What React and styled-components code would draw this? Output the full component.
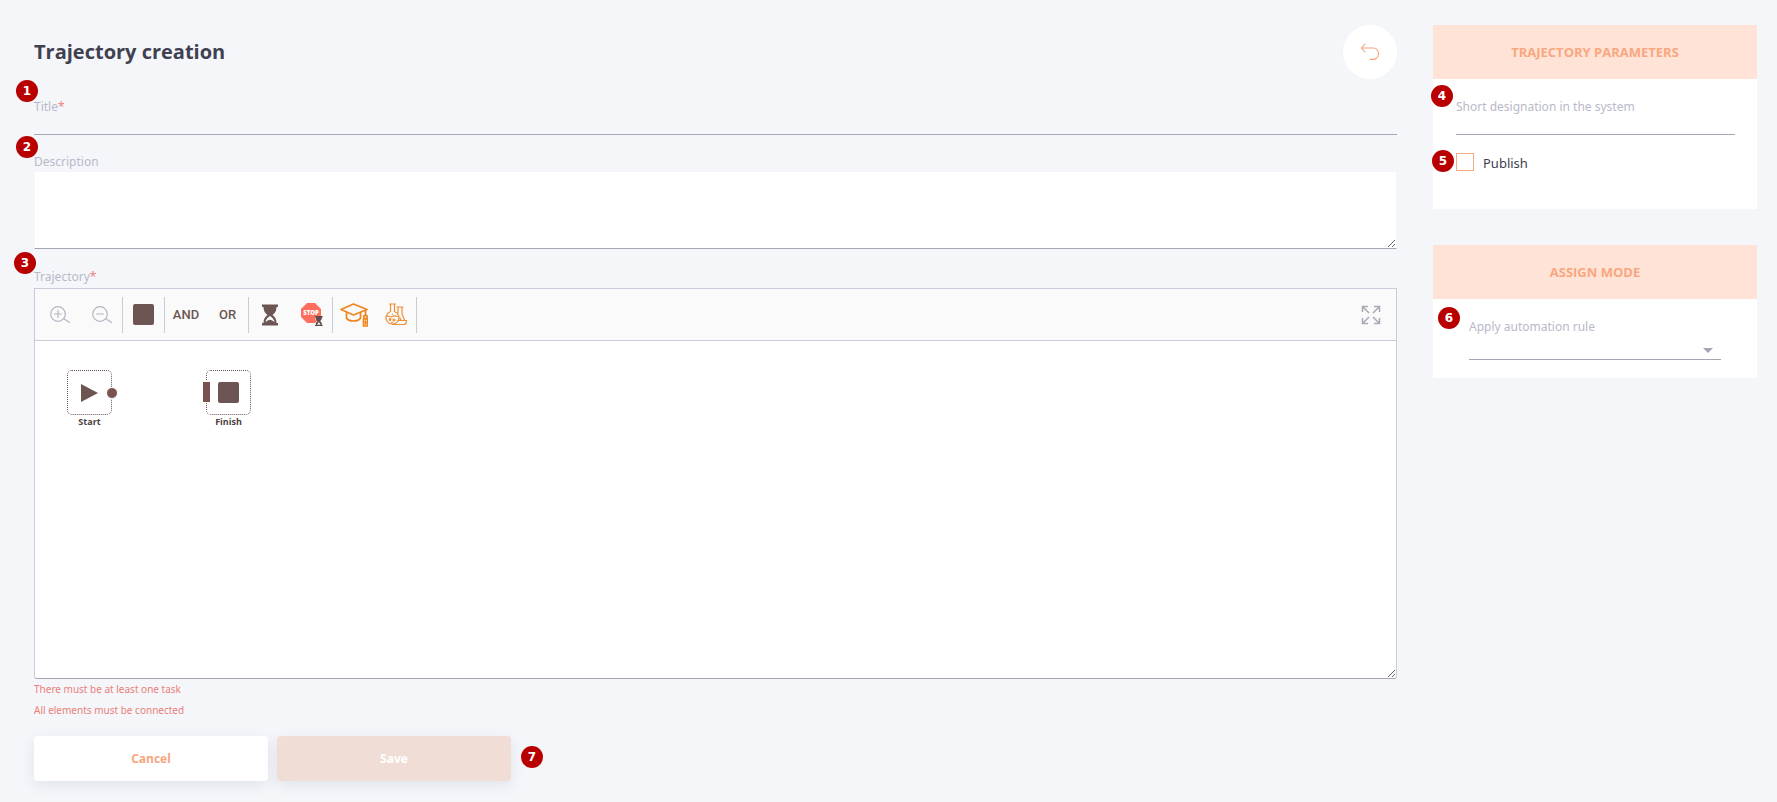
import React, { useState } from "react";
import styled, { createGlobalStyle } from "styled-components";

const GlobalStyle = createGlobalStyle`
    *, *::before, *::after {
        box-sizing: border-box;
    }
    body {
        margin: 0;
        background: #f4f6fa;
        color: #3f4050;
        font-family: "Noto Sans", "Open Sans", sans-serif;
        font-size: 12px;
    }
    button, input, textarea, select {
        font: inherit;
        color: inherit;
    }
`

const Page = styled.div`
    display: grid;
    grid-template-columns: minmax(0, 1fr) 324px;
    gap: 36px;
    padding: 25px 20px 21px 34px;
`
const Main = styled.main`
    display: flex;
    flex-direction: column;
`
const Header = styled.header`
    display: flex;
    align-items: center;
    justify-content: space-between;
    height: 54px;
    margin-bottom: 18px;
`
const PageTitle = styled.h1`
    margin: 0;
    font-family: "Open Sans", sans-serif;
    font-size: 20px;
    line-height: 28px;
    font-weight: 700;
`
const BackButton = styled.button`
    display: grid;
    place-items: center;
    width: 54px;
    height: 54px;
    padding: 0;
    border: 0;
    border-radius: 50%;
    background: #fff;
    color: #f5a680;
    cursor: pointer;
`
const Form = styled.form`
    display: flex;
    flex-direction: column;
`
const Field = styled.div`
    position: relative;
    display: flex;
    flex-direction: column;
    margin-bottom: ${props => props.$gap || 0}px;
`
const Label = styled.label`
    font-size: 12px;
    line-height: 20px;
    color: #b8b9c9;
`
const Required = styled.span`
    color: #f37f75;
`
const TextInput = styled.input`
    width: 100%;
    height: 18px;
    padding: 0;
    border: 0;
    border-bottom: 1px solid #a5a6b4;
    border-radius: 0;
    background: transparent;
    outline: none;
`
const TextArea = styled.textarea`
    display: block;
    width: 100%;
    height: 77px;
    padding: 8px;
    border: 1px solid #f4f6fa;
    border-top: 0;
    border-bottom-color: #a5a6b4;
    background: #fff;
    outline: none;
    resize: vertical;
`
const Badge = styled.span`
    position: absolute;
    left: ${props => props.$left}px;
    top: ${props => props.$top}px;
    z-index: 1;
    display: grid;
    place-items: center;
    width: 22px;
    height: 22px;
    border-radius: 50%;
    background: #b80000;
    color: #fff;
    font: 700 12px/22px "DejaVu Sans", sans-serif;
`
const Editor = styled.div`
    display: flex;
    flex-direction: column;
    height: 391px;
    margin-top: 1px;
    overflow: hidden;
    border: 1px solid #cacad9;
    border-bottom-color: #a5a6b4;
    border-radius: 0 0 3px 3px;
    background: #fff;
    resize: vertical;
`
const Toolbar = styled.div`
    display: flex;
    align-items: center;
    flex: none;
    height: 52px;
    padding: 0 5px 0 4px;
    border-bottom: 1px solid #cacad9;
    background: #fafafa;
`
const ToolGroup = styled.div`
    display: flex;
    height: 36px;
    border-right: 1px solid #cacad9;
`
const Tool = styled.button`
    display: grid;
    place-items: center;
    width: 42px;
    height: 36px;
    padding: 0;
    border: 0;
    background: none;
    color: ${props => props.$color || "#6d5553"};
    font: 500 13px/16px Roboto, sans-serif;
    cursor: pointer;

    &:last-child {
        width: 41px;
    }
`
const FullScreenTool = styled(Tool)`
    margin-left: auto;
`
const Canvas = styled.div`
    position: relative;
    flex: 1;
`
const Node = styled.div`
    position: absolute;
    left: ${props => props.$x}px;
    top: ${props => props.$y}px;
    display: grid;
    place-items: center;
    width: 45px;
    height: 45px;
    border: 1px dotted #6d5553;
    border-radius: 5px;
    color: #6d5553;
`
const NodeName = styled.span`
    position: absolute;
    top: 100%;
    left: 0;
    right: 0;
    text-align: center;
    font-family: "Open Sans", sans-serif;
    font-size: 9px;
    line-height: 16px;
    font-weight: 700;
    color: #4d4040;
`
const OutPort = styled.span`
    position: absolute;
    top: 16px;
    right: -7px;
    width: 12px;
    height: 12px;
    border: 1px solid #fff;
    border-radius: 50%;
    background: #7a5250;
`
const InPort = styled.span`
    position: absolute;
    top: 10px;
    left: -5px;
    width: 9px;
    height: 22px;
    border: 1px solid #fff;
    background: #7a5250;
`
const Errors = styled.ul`
    margin: 0 0 15px;
    padding: 0;
    list-style: none;
    font-size: 10px;
    line-height: 21px;
    color: #ea7f78;
`
const Actions = styled.div`
    position: relative;
    display: flex;
    gap: 9px;
`
const ActionButton = styled.button`
    width: 234px;
    height: 45px;
    padding: 0;
    border: 0;
    border-radius: 4px;
    background: ${props => props.$primary ? "#f0ded6" : "#fff"};
    color: ${props => props.$primary ? "#fff" : "#f5a680"};
    box-shadow: 0 4px 14px rgba(60, 64, 90, 0.1);
    font-family: "Open Sans", sans-serif;
    font-size: 12px;
    font-weight: 700;
    cursor: pointer;
`
const Sidebar = styled.aside`
    display: flex;
    flex-direction: column;
    gap: 36px;
`
const Panel = styled.section`
    position: relative;
    background: #fff;
`
const PanelTitle = styled.h2`
    margin: 0;
    font-family: "Open Sans", sans-serif;
    font-size: 13px;
    line-height: 54px;
    font-weight: 700;
    text-align: center;
    text-transform: uppercase;
    background: #ffe3d6;
    color: #f8a780;
`
const PanelBody = styled.div`
    padding: ${props => props.$padding};
`
const CheckLabel = styled.label`
    display: flex;
    align-items: flex-start;
    gap: 9px;
    font-size: 13px;
    line-height: 20px;
`
const Checkbox = styled.input`
    appearance: none;
    width: 18px;
    height: 18px;
    margin: 0;
    border: 1px solid #f0ab88;
    background: #fff;

    &:checked {
        background: #f5a680;
    }
`
const SelectWrap = styled.div`
    position: relative;
    display: flex;
`
const Select = styled.select`
    appearance: none;
    width: 100%;
    height: 23px;
    padding: 0 24px 0 0;
    border: 0;
    border-bottom: 1px solid #a5a6b4;
    border-radius: 0;
    background: transparent;
    outline: none;
`
const Arrow = styled.span`
    position: absolute;
    right: 8px;
    top: 11px;
    border: 5px solid transparent;
    border-top-color: #a5a6b4;
    border-bottom: 0;
    pointer-events: none;
`

const BackIcon = () => (
    <svg width="20" height="18" viewBox="0 0 20 18" fill="none" stroke="currentColor" strokeWidth="1.1" strokeLinecap="round" strokeLinejoin="round">
        <path d="M5 1 1.500 5l3.500 4M1.500 5H13.500a5 5.700 0 0 1 0 11.400h-3.500" />
    </svg>
)

const ZoomIcon = ({ plus }) => (
    <svg width="22" height="20" viewBox="0 0 22 20" fill="none" stroke="currentColor" strokeWidth="1.2" strokeLinecap="round">
        <circle cx="9" cy="9" r="7.3" />
        <path d="m14.5 13.5 6 4M5.5 9h7" />
        {plus && <path d="M9 5.5v7" />}
    </svg>
)

const SquareIcon = () => (
    <svg width="21" height="21" viewBox="0 0 21 21">
        <rect width="21" height="21" rx="2" fill="currentColor" />
    </svg>
)

const PlayIcon = () => (
    <svg width="19" height="20" viewBox="0 0 19 20">
        <path d="M1 1v18l17-9z" fill="currentColor" />
    </svg>
)

const hourglass = "M0 0h16v2.500h-1.500c0 4-1.500 6.200-4 8 2.500 1.800 4 4 4 8H16V21H0v-2.500h1.500c0-4 1.500-6.200 4-8-2.500-1.800-4-4-4-8H0z"

const HourglassIcon = () => (
    <svg width="16" height="22" viewBox="0 0 16 21">
        <path d={hourglass} fill="currentColor" />
        <path d="M8 11.500c-2.500 1.500-4.200 3.600-4.500 6.200C5 16.500 6.500 15.300 8 15.300s3 1.200 4.500 2.400c-.3-2.600-2-4.700-4.500-6.200z" fill="#fafafa" />
    </svg>
)

const StopIcon = () => (
    <svg width="22" height="24" viewBox="0 0 22 24">
        <path d="M6 0h8l6 6v8l-6 6H6l-6-6V6z" fill="#fb6f5c" />
        <text x="10" y="12" textAnchor="middle" fontFamily="Open Sans, sans-serif" fontSize="6" fontWeight="800" fill="#fff">STOP</text>
        <g transform="translate(14 13)">
            <path d="M0 0h8v4H0z" fill="#fafafa" opacity="0.5" />
            <path transform="scale(.48)" d={hourglass} fill="#5e4b4b" />
            <path d="M3.800 6 2 8.700h3.700z" fill="#fafafa" />
        </g>
    </svg>
)

const CapIcon = () => (
    <svg width="28" height="24" viewBox="0 0 28 24" fill="none" stroke="#ee861d" strokeWidth="1.7" strokeLinejoin="round" strokeLinecap="round">
        <path d="M1 6.500 13.500 1 27 6.500 13.500 12z" />
        <path d="M6.500 9.500v5.500c2 4 12 4 14 0V9.500" />
        <path d="M25.500 7.500v5" />
        <rect x="24" y="12.500" width="3" height="3" />
        <path d="M23.500 16h4v7h-4zM25.500 18v3" />
    </svg>
)

const FlasksIcon = () => (
    <svg width="22" height="23" viewBox="0 0 22 23" fill="none" stroke="#ee8f35" strokeWidth="1.200" strokeLinejoin="round" strokeLinecap="round">
        <path d="M4.500 1h6M5.500 1v7.500a6.500 6.500 0 1 0 4 0V1" />
        <path d="M1.500 13.500c2-1.500 4 1.500 6 0s3-.5 5 0" />
        <path d="M12 4h6M13 4v6M17 4v7l2.500 6" />
        <path d="M13 17.500h8.500c0 2.500-1 4-3 4H7.500M15 15l1 2.500" />
        <circle cx="5" cy="16.500" r=".8" />
        <circle cx="9" cy="17" r="1" />
        <path d="M6.500 19.500h1M7.500 11v.3" />
    </svg>
)

const FullScreenIcon = () => (
    <svg width="20" height="20" viewBox="0 0 20 20" fill="none" stroke="currentColor" strokeWidth="1.500">
        <path d="M1.500 7V1.500H7M1.500 1.500 8 8M13 1.500h5.500V7M18.500 1.500 12 8M1.500 13v5.500H7M1.500 18.500 8 12M13 18.500h5.500V13M18.500 18.500 12 12" />
    </svg>
)

const TrajectoryEditor = () => (
    <Editor role="group" aria-labelledby="trajectory-label">
        <Toolbar>
            <ToolGroup>
                <Tool type="button" $color="#b4b5c3" aria-label="Zoom in"><ZoomIcon plus /></Tool>
                <Tool type="button" $color="#b4b5c3" aria-label="Zoom out"><ZoomIcon /></Tool>
            </ToolGroup>
            <ToolGroup>
                <Tool type="button" aria-label="Finish"><SquareIcon /></Tool>
            </ToolGroup>
            <ToolGroup>
                <Tool type="button">AND</Tool>
                <Tool type="button">OR</Tool>
            </ToolGroup>
            <ToolGroup>
                <Tool type="button" aria-label="Delay"><HourglassIcon /></Tool>
                <Tool type="button" aria-label="Stop by time"><StopIcon /></Tool>
            </ToolGroup>
            <ToolGroup>
                <Tool type="button" aria-label="Course"><CapIcon /></Tool>
                <Tool type="button" aria-label="Practice"><FlasksIcon /></Tool>
            </ToolGroup>
            <FullScreenTool type="button" $color="#a9aab8" aria-label="Full screen"><FullScreenIcon /></FullScreenTool>
        </Toolbar>
        <Canvas>
            <Node $x={32} $y={29}>
                <PlayIcon />
                <OutPort />
                <NodeName>Start</NodeName>
            </Node>
            <Node $x={171} $y={29}>
                <SquareIcon />
                <InPort />
                <NodeName>Finish</NodeName>
            </Node>
        </Canvas>
    </Editor>
)

const App = () => {
    const [publish, setPublish] = useState(false)

    return (
        <>
            <GlobalStyle />
            <Page>
                <Main>
                    <Header>
                        <PageTitle>Trajectory creation</PageTitle>
                        <BackButton type="button" aria-label="Back"><BackIcon /></BackButton>
                    </Header>
                    <Form onSubmit={e => e.preventDefault()}>
                        <Field $gap={17}>
                            <Badge $left={-18} $top={-17}>1</Badge>
                            <Label htmlFor="title">Title<Required>*</Required></Label>
                            <TextInput id="title" />
                        </Field>
                        <Field $gap={18}>
                            <Badge $left={-18} $top={-16}>2</Badge>
                            <Label htmlFor="description">Description</Label>
                            <TextArea id="description" />
                        </Field>
                        <Field>
                            <Badge $left={-20} $top={-15}>3</Badge>
                            <Label as="span" id="trajectory-label">Trajectory<Required>*</Required></Label>
                            <TrajectoryEditor />
                        </Field>
                        <Errors>
                            <li>There must be at least one task</li>
                            <li>All elements must be connected</li>
                        </Errors>
                        <Actions>
                            <ActionButton type="button">Cancel</ActionButton>
                            <ActionButton type="submit" $primary>Save</ActionButton>
                            <Badge $left={487} $top={10}>7</Badge>
                        </Actions>
                    </Form>
                </Main>
                <Sidebar>
                    <Panel>
                        <PanelTitle>Trajectory parameters</PanelTitle>
                        <PanelBody $padding="18px 22px 36px 23px">
                            <Field $gap={18}>
                                <Badge $left={-25} $top={-12}>4</Badge>
                                <Label htmlFor="designation">Short designation in the system</Label>
                                <TextInput id="designation" />
                            </Field>
                            <Field>
                                <Badge $left={-24} $top={-3}>5</Badge>
                                <CheckLabel>
                                    <Checkbox type="checkbox" checked={publish} onChange={e => setPublish(e.target.checked)} />
                                    Publish
                                </CheckLabel>
                            </Field>
                        </PanelBody>
                    </Panel>
                    <Panel>
                        <PanelTitle>Assign mode</PanelTitle>
                        <PanelBody $padding="18px 36px">
                            <Field>
                                <Badge $left={-31} $top={-10}>6</Badge>
                                <Label htmlFor="rule">Apply automation rule</Label>
                                <SelectWrap>
                                    <Select id="rule" defaultValue="">
                                        <option value=""></option>
                                    </Select>
                                    <Arrow />
                                </SelectWrap>
                            </Field>
                        </PanelBody>
                    </Panel>
                </Sidebar>
            </Page>
        </>
    )
}

export default App
